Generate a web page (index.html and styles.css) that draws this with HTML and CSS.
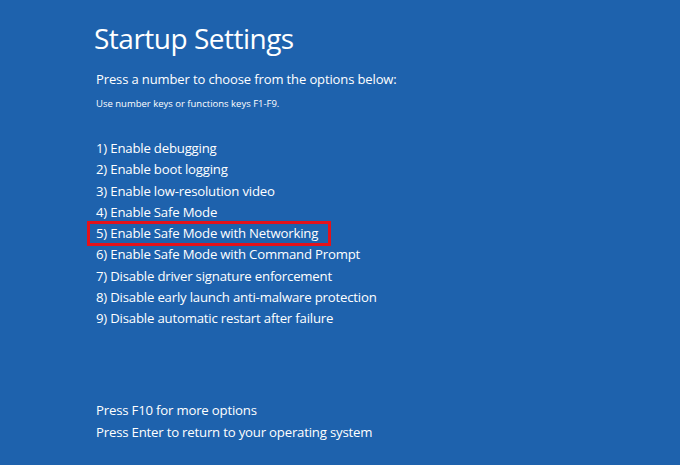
FILE: index.html
```html
<!DOCTYPE html>
<html>
<head>
<meta charset="utf-8">
<link rel="stylesheet" href="styles.css">
</head>
<body>
<div class="screen">
  <h1 class="title">Startup Settings</h1>
  <p class="lead">Press a number to choose from the options below:</p>
  <p class="hint">Use number keys or functions keys F1-F9.</p>
  <ul class="options">
    <li>1) Enable debugging</li>
    <li>2) Enable boot logging</li>
    <li>3) Enable low-resolution video</li>
    <li>4) Enable Safe Mode</li>
    <li class="selected">5) Enable Safe Mode with Networking</li>
    <li>6) Enable Safe Mode with Command Prompt</li>
    <li>7) Disable driver signature enforcement</li>
    <li>8) Disable early launch anti-malware protection</li>
    <li>9) Disable automatic restart after failure</li>
  </ul>
  <div class="footer">
    <p>Press F10 for more options</p>
    <p>Press Enter to return to your operating system</p>
  </div>
</div>
</body>
</html>
```
FILE: styles.css
```css
html, body {
  margin: 0;
  padding: 0;
  width: 680px;
  height: 465px;
  overflow: hidden;
  background: #1e62ad;
}
.screen {
  box-sizing: border-box;
  height: 465px;
  padding: 19px 0 0 95px;
  color: #ffffff;
  font-family: "Open Sans", "Noto Sans", sans-serif;
  display: flex;
  flex-direction: column;
}
.title {
  margin: 0 0 0 -1px;
  font-weight: 400;
  font-size: 28px;
  line-height: 38px;
  letter-spacing: -0.5px;
}
.lead {
  margin: 12px 0 0 1px;
  font-size: 13px;
  line-height: 20px;
  letter-spacing: -0.12px;
}
.hint {
  margin: 8px 0 0 1px;
  font-size: 9.5px;
  line-height: 14px;
}
.options {
  list-style: none;
  margin: 27px 0 0 1px;
  padding: 0;
  font-size: 13.2px;
  line-height: 21.3px;
  letter-spacing: -0.2px;
}
.options li {
  position: relative;
}
.selected::after {
  content: "";
  position: absolute;
  left: -9px;
  top: -2px;
  width: 238px;
  height: 19px;
  border: 3px solid #e4121b;
}
.footer {
  margin: auto 0 22px 1px;
  font-size: 13.2px;
  line-height: 22px;
  letter-spacing: -0.2px;
}
.footer p {
  margin: 0;
}
```
